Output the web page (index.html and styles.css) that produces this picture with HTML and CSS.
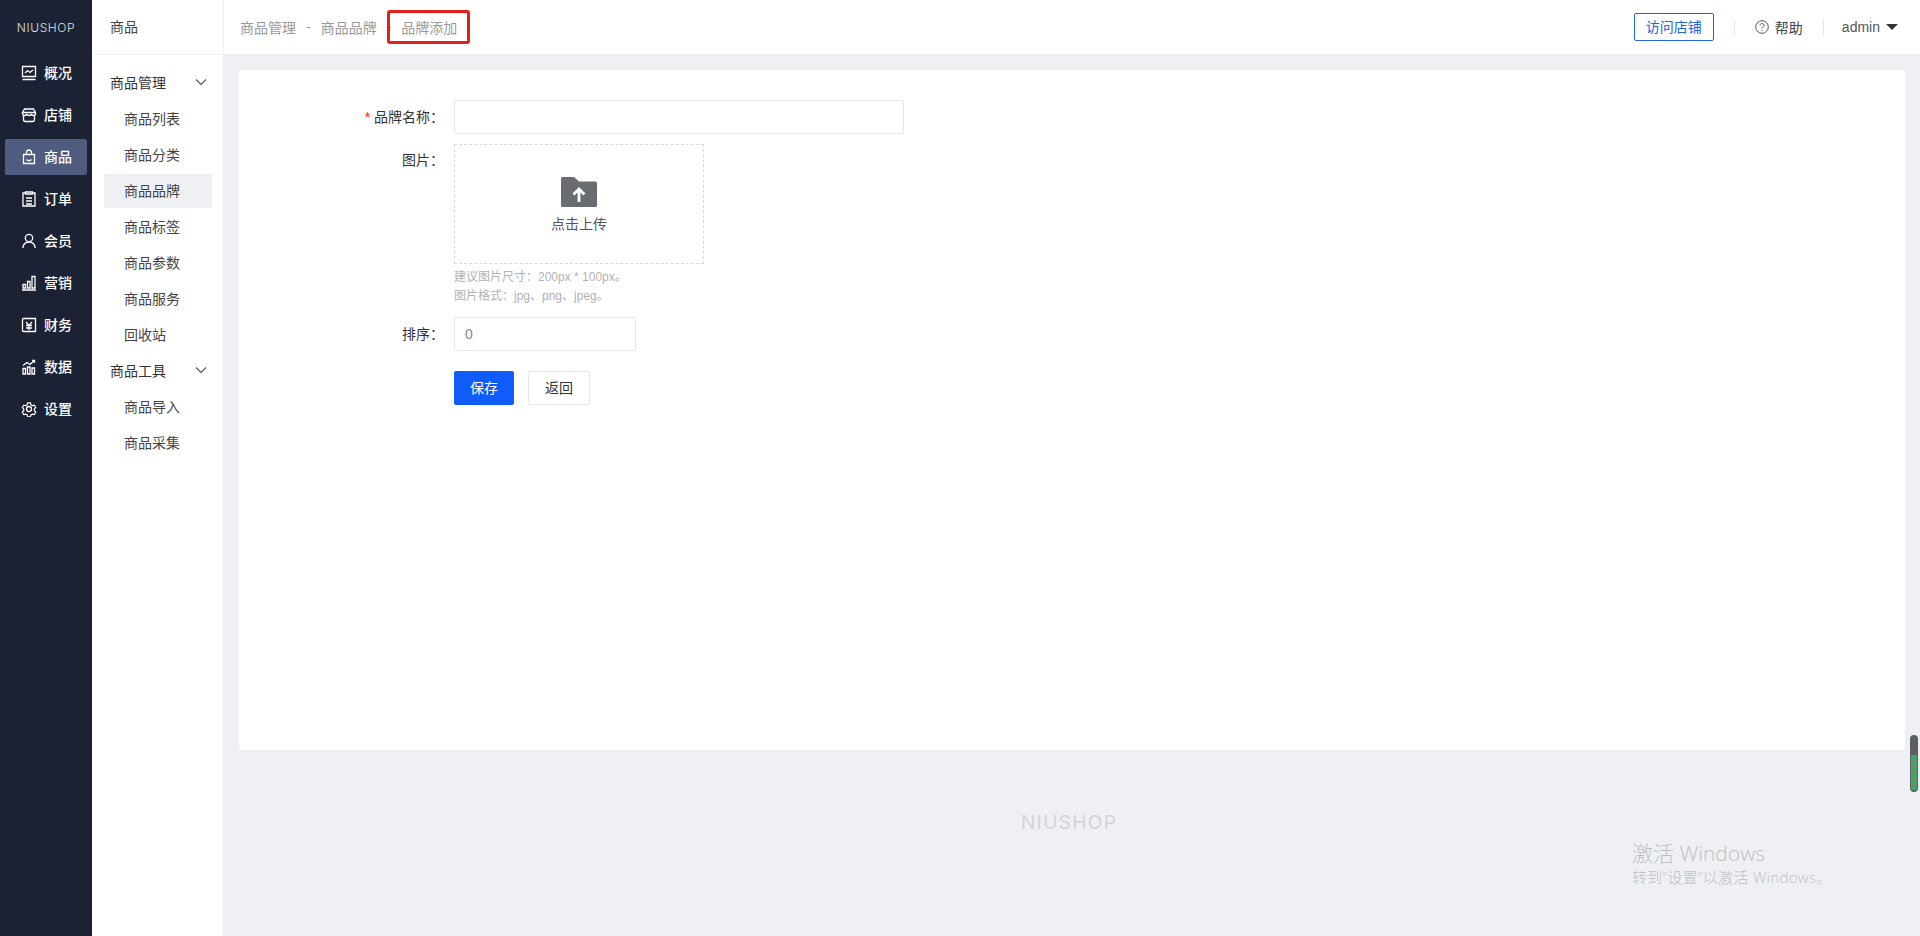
FILE: index.html
```html
<!DOCTYPE html>
<html lang="zh">
<head>
<meta charset="utf-8">
<title>品牌添加</title>
<link rel="stylesheet" href="styles.css">
</head>
<body>
<div class="app">
  <aside class="rail">
    <div class="logo">NIUSHOP</div>
    <nav class="rail-nav">
      <a class="rail-item"><svg class="ri" viewBox="0 0 16 16"><path d="M1.500 1.500h13v10h-13zM1.500 14.500h13M4 8l2.500-2.500L9 7.500l3-2.500"/></svg><span>概况</span></a>
      <a class="rail-item"><svg class="ri" viewBox="0 0 16 16"><path d="M3.500 2h9l2 3.500v1c0 1.200-1 2-2 2-1.200 0-2-.5-2.200-1.500-.3 1-1.200 1.500-2.300 1.500S6 8 5.700 7c-.2 1-1 1.500-2.200 1.500-1 0-2-.8-2-2v-1zM2.500 8.500v4a2 2 0 0 0 2 2h7a2 2 0 0 0 2-2v-4M1.500 5.500h13"/></svg><span>店铺</span></a>
      <a class="rail-item rail-active"><svg class="ri" viewBox="0 0 16 16"><path d="M2.500 5.500h11v9h-11zM5.500 5.500V3.500a2.500 2.500 0 0 1 5 0v2M5.500 10.500c1.500 1.500 3.500 1.500 5 0"/></svg><span>商品</span></a>
      <a class="rail-item"><svg class="ri" viewBox="0 0 16 16"><path d="M4.500 2h-2.500v13h12V2h-2.500M4.500 1h7v2h-7zM5 7h6M5 10h6M5 13h6"/></svg><span>订单</span></a>
      <a class="rail-item"><svg class="ri" viewBox="0 0 16 16"><circle cx="8" cy="5" r="3.700"/><path d="M1.800 15c.5-3.800 3-6 6.200-6s5.700 2.200 6.200 6"/></svg><span>会员</span></a>
      <a class="rail-item"><svg class="ri" viewBox="0 0 16 16"><path d="M1 15h14M2 9.500h2.500v3.500H2zM6.500 6.500H9V13H6.500zM11 1.500h3V13h-3z"/></svg><span>营销</span></a>
      <a class="rail-item"><svg class="ri" viewBox="0 0 16 16"><path d="M1.500 2.500a1 1 0 0 1 1-1h12v13h-12a1 1 0 0 1-1-1zM5 5l3 3.500L11 5M5 8.500h6M5 11h6M8 8.500V13"/></svg><span>财务</span></a>
      <a class="rail-item"><svg class="ri" viewBox="0 0 16 16"><path d="M2 9.500h2.500V15H2zM6.500 8h2.500v7H6.500zM11 9h2.500v6H11zM2 6.500l4-3 3 2 4.500-4M11 1.500h2.500V4"/></svg><span>数据</span></a>
      <a class="rail-item"><svg class="ri" viewBox="0 0 16 16"><circle cx="8" cy="8" r="2.500"/><path d="M6.500 1.500h3l.5 2 1.700 1 2-.6 1.500 2.600-1.500 1.500v2l1.500 1.500-1.500 2.600-2-.6-1.700 1-.5 2h-3l-.5-2-1.700-1-2 .6L.8 11.500l1.500-1.500V8L.8 6.500l1.500-2.600 2 .6 1.700-1z" transform="translate(.6 .5) scale(.93)"/></svg><span>设置</span></a>
    </nav>
  </aside>

  <aside class="submenu">
    <div class="submenu-title">商品</div>
    <div class="submenu-body">
      <div class="group-head"><span>商品管理</span><svg class="chev" viewBox="0 0 12 8"><path d="M1 1.500l5 5 5-5"/></svg></div>
      <a class="sub-item">商品列表</a>
      <a class="sub-item">商品分类</a>
      <a class="sub-item sub-active">商品品牌</a>
      <a class="sub-item">商品标签</a>
      <a class="sub-item">商品参数</a>
      <a class="sub-item">商品服务</a>
      <a class="sub-item">回收站</a>
      <div class="group-head"><span>商品工具</span><svg class="chev" viewBox="0 0 12 8"><path d="M1 1.500l5 5 5-5"/></svg></div>
      <a class="sub-item">商品导入</a>
      <a class="sub-item">商品采集</a>
    </div>
  </aside>

  <div class="main">
    <header class="topbar">
      <div class="crumbs">
        <span>商品管理</span><span class="sep">-</span><span>商品品牌</span><span class="sep">-</span><span class="crumb-now">品牌添加</span>
      </div>
      <div class="top-right">
        <a class="visit">访问店铺</a>
        <span class="vline"></span>
        <a class="help"><svg class="help-ic" viewBox="0 0 14 14"><circle cx="7" cy="7" r="6.300"/><path d="M5 5.400c0-1.200.9-1.900 2-1.900s2 .7 2 1.800c0 1.500-2 1.500-2 3.200M7 10v1"/></svg>帮助</a>
        <span class="vline vline-last"></span>
        <a class="user">admin<span class="caret"></span></a>
      </div>
    </header>

    <div class="content">
      <section class="card">
        <div class="row row-name">
          <label class="lbl"><i class="req">*</i> 品牌名称：</label>
          <div class="input input-long"></div>
        </div>
        <div class="row row-pic">
          <label class="lbl">图片：</label>
          <div class="field">
            <div class="upload">
              <svg class="folder" viewBox="0 0 36 30"><path d="M1.500 0H13l5 4.500h16.500A1.500 1.500 0 0 1 36 6v22.500a1.500 1.500 0 0 1-1.500 1.500h-33A1.500 1.500 0 0 1 0 28.500v-27A1.500 1.500 0 0 1 1.500 0z"/><path class="arrow" d="M18 25V12.500M12.500 17.500L18 12l5.500 5.500"/></svg>
              <span class="upload-text">点击上传</span>
            </div>
            <p class="tip tip-first">建议图片尺寸：200px * 100px。</p>
            <p class="tip">图片格式：jpg、png、jpeg。</p>
          </div>
        </div>
        <div class="row row-sort">
          <label class="lbl">排序：</label>
          <div class="input input-short">0</div>
        </div>
        <div class="row row-actions">
          <span class="lbl"></span>
          <a class="btn btn-primary">保存</a>
          <a class="btn btn-plain">返回</a>
        </div>
      </section>
      <footer class="foot-logo">NIUSHOP</footer>
    </div>
  </div>
</div>
<div class="activate">
  <div class="activate-title">激活 Windows</div>
  <div class="activate-sub">转到“设置”以激活 Windows。</div>
</div>
<div class="scroll-widget"><span class="scroll-fill"></span></div>
</body>
</html>
```

FILE: styles.css
```css
* { box-sizing: border-box; }
html, body { margin: 0; height: 100%; overflow: hidden; }
body {
  font-family: "Liberation Sans", "Noto Sans CJK SC", sans-serif;
  font-size: 14px;
  color: #333;
  background: #eff0f4;
}
a { text-decoration: none; color: inherit; }
p { margin: 0; }

.app { display: flex; height: 936px; }

/* dark rail */
.rail { width: 92px; flex: none; background: #1a2233; }
.logo {
  height: 55px;
  display: flex;
  align-items: center;
  justify-content: center;
  font-family: "Inter", sans-serif;
  font-weight: 300;
  font-size: 12px;
  letter-spacing: .6px;
  color: #dfe1e6;
}
.rail-nav { display: flex; flex-direction: column; gap: 6px; padding: 0 5px; }
.rail-item {
  height: 36px;
  display: flex;
  align-items: center;
  gap: 7px;
  padding-left: 16px;
  color: #fff;
  font-weight: 500;
  border-radius: 2px;
}
.rail-item span { margin-bottom: 2px; }
.rail-active { background: #4f5b7f; }
.ri { width: 16px; height: 16px; flex: none; fill: none; stroke: #fff; stroke-width: 1.300; }

/* sub menu */
.submenu { width: 132px; flex: none; background: #fff; border-right: 1px solid #eef0f3; }
.submenu-title {
  height: 55px;
  line-height: 54px;
  padding-left: 18px;
  border-bottom: 1px solid #eef0f3;
  color: #444;
}
.submenu-body { display: flex; flex-direction: column; padding: 10px 11px 0 12px; }
.group-head {
  height: 36px;
  display: flex;
  align-items: center;
  justify-content: space-between;
  padding: 0 5px 0 6px;
  color: #333;
}
.group-head span { margin-bottom: 2px; }
.chev { width: 12px; height: 8px; fill: none; stroke: #555; stroke-width: 1.100; margin-top: -2px; }
.sub-item { height: 36px; line-height: 36px; padding-left: 20px; color: #444; }
.sub-active { background: #eff0f4; height: 34px; line-height: 34px; margin: 1px 0; }

/* top bar */
.main { flex: 1; min-width: 0; display: flex; flex-direction: column; }
.topbar {
  height: 55px;
  flex: none;
  background: #fff;
  border-bottom: 1px solid #eef0f3;
  display: flex;
  align-items: center;
  justify-content: space-between;
  padding: 0 22px 0 16px;
}
.crumbs { display: flex; align-items: center; color: #999; }
.sep { margin: 0 10px; }
.crumb-now { position: relative; }
.crumb-now::after {
  content: "";
  position: absolute;
  left: -14px;
  right: -13px;
  top: -7px;
  bottom: -7px;
  border: 3px solid #e3201b;
  border-radius: 3px;
}
.top-right { display: flex; align-items: center; color: #444; }
.visit {
  width: 80px;
  height: 28px;
  line-height: 26px;
  text-align: center;
  border: 1px solid #1f66e0;
  border-radius: 2px;
  color: #1f66e0;
}
.vline { width: 1px; height: 16px; background: #e6e6e6; margin: 0 20px; }
.vline-last { margin-right: 18px; }
.help { display: flex; align-items: center; gap: 6px; }
.help-ic { width: 14px; height: 14px; fill: none; stroke: #555; stroke-width: 1; }
.user { display: flex; align-items: center; gap: 6px; color: #555; }
.caret { width: 0; height: 0; border: 6px solid transparent; border-top-color: #333; border-bottom-width: 0; }

/* form */
.content { flex: 1; padding: 15px 15px 0 15px; }
.card { height: 680px; background: #fff; border-radius: 2px; padding-top: 30px; }
.row { display: flex; align-items: flex-start; }
.lbl { width: 205px; margin-right: 10px; text-align: right; line-height: 34px; color: #333; flex: none; }
.req { color: #f5222d; font-style: normal; }
.input {
  height: 34px;
  line-height: 32px;
  border: 1px solid #e6e6e6;
  border-radius: 2px;
  padding-left: 10px;
  color: #888;
}
.input-long { width: 450px; }
.input-short { width: 182px; }
.row-pic { margin-top: 10px; }
.row-pic .lbl { line-height: 32px; }
.upload {
  width: 250px;
  height: 120px;
  border: 1px dashed #d9d9d9;
  display: flex;
  flex-direction: column;
  align-items: center;
  padding-top: 32px;
  color: #555;
}
.folder { width: 36px; height: 30px; fill: #696c70; }
.arrow { fill: none; stroke: #fff; stroke-width: 2.800; }
.upload-text { margin-top: 7px; line-height: 20px; }
.tip { font-size: 12px; line-height: 19px; color: #b2b2b2; }
.tip-first { margin-top: 4px; }
.row-sort { margin-top: 11px; }
.row-actions { margin-top: 20px; }
.btn {
  height: 34px;
  line-height: 32px;
  width: 60px;
  text-align: center;
  border-radius: 2px;
  border: 1px solid #105cfb;
}
.btn-primary { background: #105cfb; color: #fff; }
.btn-plain { width: 62px; margin-left: 14px; background: #fff; border-color: #e6e6e6; color: #333; }

.foot-logo {
  margin-top: 57px;
  padding-left: 782px;
  font-family: "Inter", sans-serif;
  font-size: 19px;
  letter-spacing: 1.400px;
  color: #d3d4d8;
  line-height: 32px;
}

/* overlays */
.activate { position: absolute; left: 1632px; top: 840px; color: #bfc0c4; }
.activate-title { font-family: "Open Sans", "Noto Sans CJK SC", sans-serif; font-weight: 300; font-size: 21px; line-height: 27px; }
.activate-sub { font-family: "Open Sans", "Noto Sans CJK SC", sans-serif; font-weight: 300; font-size: 15px; line-height: 20px; letter-spacing: .3px; }
.scroll-widget {
  position: absolute;
  left: 1910px;
  top: 735px;
  width: 8px;
  height: 57px;
  background: #5b5e62;
  border-radius: 4px;
  padding: 20px 1px 2px;
}
.scroll-fill {
  display: block;
  height: 100%;
  background: repeating-linear-gradient(#3fa564 0 2px, #6d8f78 2px 3px);
}
```
